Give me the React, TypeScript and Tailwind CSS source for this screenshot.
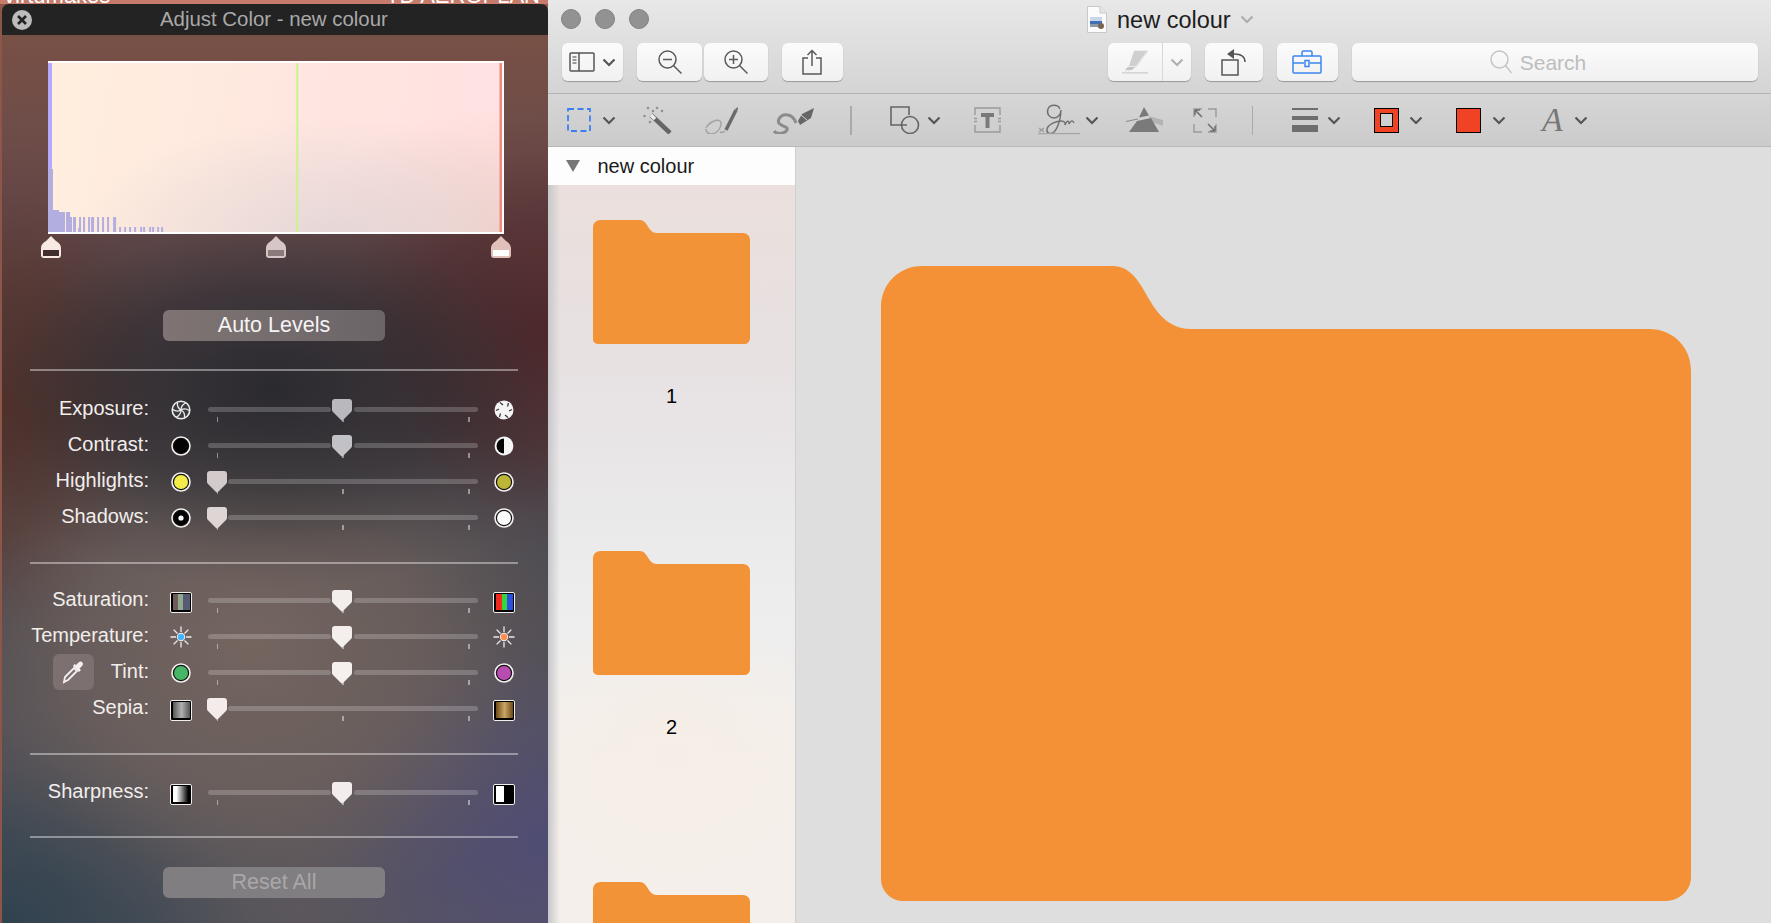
import React from 'react';

type SliderRow = {
  label: string;
  left: React.ReactNode;
  right: React.ReactNode;
  start?: boolean;
  thumb: string;
  dropper?: boolean;
};

const bars: [number, number, number][] = [
  [0, 5, 63], [5, 6, 22], [11, 4, 20], [15, 2, 20], [18, 4, 20], [22, 2, 15], [25, 3, 15],
  [30, 2, 4], [31, 2, 15], [35, 2, 15], [40, 2, 15], [43, 3, 15], [49, 2, 15], [54, 2, 15],
  [59, 2, 15], [65, 3, 15], [71, 2, 5], [76, 2, 5], [81, 2, 5], [86, 2, 5], [92, 2, 5],
  [95, 2, 5], [101, 2, 5], [104, 2, 5], [109, 2, 5], [113, 2, 5],
];

const Chevron = ({ className = '', color = '#555' }: { className?: string; color?: string }) => (
  <svg viewBox="0 0 14 9" className={`h-[9px] w-[14px] shrink-0 ${className}`}>
    <polyline points="1.5,1.5 7,7 12.5,1.5" fill="none" stroke={color} strokeWidth="2.2" />
  </svg>
);

const Ring = ({ fill, children }: { fill: string; children?: React.ReactNode }) => (
  <svg viewBox="0 0 20 20" className="h-[20px] w-[20px]">
    <circle cx="10" cy="10" r="9" fill="#111" stroke="#f4f0ee" strokeWidth="1.6" />
    <circle cx="10" cy="10" r="7" fill={fill} />
    {children}
  </svg>
);

const ApertureDark = () => (
  <svg viewBox="0 0 20 20" className="h-[20px] w-[20px]">
    <circle cx="10" cy="10" r="8.8" fill="#3a3a3c" stroke="#eee" strokeWidth="1.6" />
    <g fill="none" stroke="#eee" strokeWidth="1.3">
      <path d="M10 10C10 7 11.5 4.5 14.5 3" />
      <path d="M10 10C12.6 8.5 15.5 8.5 18 10.5" />
      <path d="M10 10C12.6 11.5 14 14 13.5 17.5" />
      <path d="M10 10C10 13 8.5 15.5 5.5 17" />
      <path d="M10 10C7.4 11.5 4.5 11.5 2 9.5" />
      <path d="M10 10C7.4 8.5 6 6 6.5 2.5" />
    </g>
  </svg>
);

const ApertureLight = () => (
  <svg viewBox="0 0 20 20" className="h-[20px] w-[20px]">
    <circle cx="10" cy="10" r="9.5" fill="#f4f4f4" />
    <g fill="none" stroke="#3a3a3c" strokeWidth="1.3">
      <path d="M6 2.5L9 5" />
      <path d="M14.5 3L13.5 6.5" />
      <path d="M18 9.5L15 11" />
      <path d="M14 17.5L11 15" />
      <path d="M5.5 17L6.5 13.5" />
      <path d="M2 10.5L5 9" />
    </g>
  </svg>
);

const Half = () => (
  <svg viewBox="0 0 20 20" className="h-[20px] w-[20px]">
    <circle cx="10" cy="10" r="9.4" fill="#f6f6f6" />
    <path d="M10 2.5A7.5 7.5 0 0 0 10 17.500Z" fill="#050505" />
  </svg>
);

const Sun = ({ dot }: { dot: string }) => (
  <svg viewBox="0 0 22 22" className="h-[22px] w-[22px]">
    <g stroke="#f0ecec" strokeWidth="1.3">
      <path d="M11 0.500V6M11 16V21.500M0.500 11H6M16 11H21.500M3.600 3.600L7.500 7.500M14.500 14.500L18.400 18.400M18.400 3.600L14.500 7.500M7.500 14.500L3.600 18.400" />
    </g>
    <circle cx="11" cy="11" r="4.200" fill="#f4f0f0" />
    <circle cx="11" cy="11" r="3.200" fill={dot} />
  </svg>
);

const Swatch = ({ inner }: { inner: string }) => (
  <div className="h-[21px] w-[22px] translate-y-[1px] rounded-[2px] border-[1.5px] border-[#f2eeec] bg-black p-[1.5px]">
    <div className={`h-full w-full ${inner}`} />
  </div>
);

const sliders: SliderRow[][] = [
  [
    { label: 'Exposure:', left: <ApertureDark />, right: <ApertureLight />, thumb: '#b9b9bd' },
    { label: 'Contrast:', left: <Ring fill="#030303" />, right: <Half />, thumb: '#c2c2c6' },
    { label: 'Highlights:', left: <Ring fill="#f5ec4a" />, right: <Ring fill="#bdb535" />, start: true, thumb: '#d3cbcb' },
    {
      label: 'Shadows:',
      left: (
        <Ring fill="#030303">
          <circle cx="10" cy="10" r="2.600" fill="#fff" />
        </Ring>
      ),
      right: <Ring fill="#fbfbfb" />,
      start: true,
      thumb: '#ded6d4',
    },
  ],
  [
    {
      label: 'Saturation:',
      left: <Swatch inner="bg-[linear-gradient(90deg,#6e5a5a_0_30%,#8fa98d_30%_60%,#565a72_60%)]" />,
      right: <Swatch inner="bg-[linear-gradient(90deg,#ef2b1f_0_33%,#35d63a_33%_66%,#2c4fe0_66%)]" />,
      thumb: '#f3eeec',
    },
    { label: 'Temperature:', left: <Sun dot="#45b5ff" />, right: <Sun dot="#ff8a50" />, thumb: '#f4eeec' },
    { label: 'Tint:', left: <Ring fill="#46b566" />, right: <Ring fill="#b84cb0" />, thumb: '#f5efed', dropper: true },
    {
      label: 'Sepia:',
      left: <Swatch inner="bg-[linear-gradient(90deg,#555_0,#b0b0b0_50%,#555)]" />,
      right: <Swatch inner="bg-[linear-gradient(90deg,#6e4a18_0,#c9a566_50%,#6e4a18)]" />,
      start: true,
      thumb: '#f3ecea',
    },
  ],
  [
    {
      label: 'Sharpness:',
      left: <Swatch inner="bg-[linear-gradient(90deg,#fff_0,#fff_20%,#000_90%)]" />,
      right: <Swatch inner="bg-[linear-gradient(90deg,#fff_0_45%,#000_45%)]" />,
      thumb: '#f2edec',
    },
  ],
];

const Thumb = ({ color, className }: { color: string; className: string }) => (
  <svg viewBox="0 0 20 22" className={`absolute top-[-8px] h-[22px] w-[20px] ${className}`}>
    <path d="M3 0H17Q20 0 20 3V11Q20 12 19 13L11 21Q10 22 9 21L1 13Q0 12 0 11V3Q0 0 3 0Z" fill={color} />
  </svg>
);

const Slider = ({ row }: { row: SliderRow }) => (
  <div className="relative ml-[15.500px] h-[5px] w-[270px]">
    {row.start ? (
      <div className="absolute left-[20px] right-0 top-0 h-[5px] rounded-full bg-white/20" />
    ) : (
      <>
        <div className="absolute left-0 top-0 h-[5px] w-[123.500px] rounded-full bg-white/20" />
        <div className="absolute left-[146px] right-0 top-0 h-[5px] rounded-full bg-white/20" />
      </>
    )}
    <div className="absolute left-[9px] top-[10px] h-[5px] w-[1.500px] bg-white/45" />
    <div className="absolute left-[134.500px] top-[10px] h-[5px] w-[1.500px] bg-white/45" />
    <div className="absolute left-[260.500px] top-[10px] h-[5px] w-[1.500px] bg-white/45" />
    <Thumb color={row.thumb} className={row.start ? '-left-[0.500px]' : 'left-[124.500px]'} />
  </div>
);

const Row = ({ row }: { row: SliderRow }) => (
  <div className="flex h-[36px] items-center">
    <div className="flex w-[149px] items-center justify-end text-[20px] leading-none text-[#f2eeec]">
      {row.dropper && (
        <div className="mr-[17px] flex h-[36px] w-[41px] items-center justify-center rounded-[6px] bg-[#7c7170]">
          <svg viewBox="0 0 24 24" className="h-[24px] w-[24px]">
            <path d="M3 22L4 17L13 8L16 11L7 20Z" fill="none" stroke="#f4f0f0" strokeWidth="1.800" />
            <path d="M12 6L18 12L20 10L18.500 8.500L21.500 5.500A2.500 2.500 0 0 0 18 2L15 5L13.500 4Z" fill="#f4f0f0" />
          </svg>
        </div>
      )}
      <span className="-translate-y-[1px]">{row.label}</span>
    </div>
    <div className="ml-[21px] flex h-[22px] w-[22px] translate-y-[1px] items-center justify-center">{row.left}</div>
    <Slider row={row} />
    <div className="ml-[15.500px] flex h-[22px] w-[22px] translate-y-[1px] items-center justify-center">{row.right}</div>
  </div>
);

const Handle = ({ body, inner, className }: { body: string; inner: string; className: string }) => (
  <svg viewBox="0 0 20 22" className={`absolute top-0 h-[22px] w-[20px] ${className}`}>
    <path d="M10 0L15 5Q20 8 20 12V19Q20 22 17 22H3Q0 22 0 19V12Q0 8 5 5Z" fill={body} />
    <rect x="1.500" y="13.500" width="17" height="7" rx="0.500" fill={inner} stroke={body} />
  </svg>
);

const Divider = ({ className }: { className: string }) => (
  <div className={`ml-[28px] h-[2px] w-[488px] shrink-0 bg-white/40 ${className}`} />
);

const Histogram = () => (
  <div className="relative ml-[46px] mt-[26px] h-[173px] w-[456px] shrink-0 border-y-2 border-r-[2.500px] border-white bg-[radial-gradient(ellipse_260px_120px_at_290px_175px,rgba(226,214,214,0.9),rgba(226,214,214,0.45)_55%,transparent),radial-gradient(ellipse_200px_130px_at_460px_175px,rgba(242,205,196,0.9),rgba(242,205,196,0.4)_55%,transparent),linear-gradient(100deg,#ffeede_0,#ffeadf_35%,#ffe5e0_60%,#ffe1e2_100%)]">
    <svg viewBox="0 0 453.5 169" className="absolute inset-0 h-full w-full" preserveAspectRatio="none">
      <rect x="0" y="0" width="4" height="108" fill="#b5a8ff" />
      {bars.map(([x, w, h], i) => (
        <rect key={i} x={x} y={169 - h} width={w} height={h} fill="#b3aee0" />
      ))}
      <rect x="248" y="0" width="2" height="169" fill="#c9f58c" />
      <rect x="451" y="0" width="2.500" height="169" fill="#f0897e" />
    </svg>
  </div>
);

const AdjustPanel = () => (
  <div className="flex h-[923px] w-[548px] shrink-0 flex-col overflow-hidden bg-[#8c5648]">
    <div className="flex h-[4px] shrink-0 items-end justify-between overflow-hidden bg-[#c67b6b] pl-[4px] pr-[8px] text-[22px] leading-none text-white">
      <span className="-mb-[3px]">virtumakes</span>
      <span className="-mb-[3px]">TD AEROPLAN</span>
    </div>
    <div className="ml-[2px] flex min-h-0 grow flex-col rounded-t-[7px] bg-[radial-gradient(ellipse_340px_200px_at_270px_385px,#2b2a2f_0,rgba(43,42,47,0.6)_50%,rgba(43,42,47,0.15)_80%,transparent_100%),radial-gradient(ellipse_330px_290px_at_250px_640px,#74655f_0,rgba(116,101,95,0.65)_50%,rgba(116,101,95,0.15)_82%,transparent_100%),radial-gradient(ellipse_260px_230px_at_545px_840px,#504d74_0,rgba(80,77,116,0.55)_50%,rgba(80,77,116,0.1)_82%,transparent_100%),radial-gradient(ellipse_300px_220px_at_0_923px,#30424f_0,rgba(48,66,79,0.55)_50%,rgba(48,66,79,0.1)_82%,transparent_100%),radial-gradient(ellipse_250px_220px_at_540px_330px,#51282a_0,rgba(81,40,42,0.6)_50%,rgba(81,40,42,0.12)_82%,transparent_100%),radial-gradient(ellipse_200px_260px_at_0_400px,#56322a_0,rgba(86,50,42,0.6)_50%,rgba(86,50,42,0.12)_82%,transparent_100%),linear-gradient(180deg,#7b5245_0,#66494a_22%,#4c4a50_52%,#5a565c_100%)]">
      <div className="flex h-[31px] shrink-0 items-center rounded-t-[7px] bg-[#232323] pl-[10px]">
        <svg viewBox="0 0 20 20" className="h-[20px] w-[20px] shrink-0">
          <circle cx="10" cy="10" r="10" fill="#bcbcbc" />
          <path d="M6 6L14 14M14 6L6 14" stroke="#232323" strokeWidth="2.600" />
        </svg>
        <span className="ml-[128px] text-[20.400px] leading-none text-[#a9a9a9]">Adjust Color - new colour</span>
      </div>
      <Histogram />
      <div className="relative mt-[2px] h-[22px] shrink-0">
        <Handle body="#f9e9e3" inner="#3f2e2c" className="left-[39px]" />
        <Handle body="#d6c6c6" inner="#8a7b7b" className="left-[264px]" />
        <Handle body="#e0c1ba" inner="#ffffff" className="left-[489px]" />
      </div>
      <div className="ml-[161px] mt-[52px] flex h-[31px] w-[222px] shrink-0 items-center justify-center rounded-[6px] bg-[linear-gradient(90deg,#7f7473,#6b6568)] text-[21.500px] leading-none text-[#f6f4f4]">
        Auto Levels
      </div>
      <Divider className="mt-[28px]" />
      <div className="-ml-[2px] mt-[20px]">
        {sliders[0].map((row) => (
          <Row key={row.label} row={row} />
        ))}
      </div>
      <Divider className="mt-[27px]" />
      <div className="-ml-[2px] mt-[18px]">
        {sliders[1].map((row) => (
          <Row key={row.label} row={row} />
        ))}
      </div>
      <Divider className="mt-[27px]" />
      <div className="-ml-[2px] mt-[19px]">
        {sliders[2].map((row) => (
          <Row key={row.label} row={row} />
        ))}
      </div>
      <Divider className="mt-[26px]" />
      <div className="ml-[161px] mt-[29px] flex h-[31px] w-[222px] shrink-0 items-center justify-center rounded-[6px] bg-[#807e80] text-[21.500px] leading-none text-[#a9a7a9]">
        Reset All
      </div>
    </div>
  </div>
);

const ToolButton = ({ className, children }: { className: string; children: React.ReactNode }) => (
  <div className={`flex h-[38px] shrink-0 items-center justify-center rounded-[6px] bg-linear-to-b from-[#fbfbfb] to-[#f1f1f1] shadow-[0_1px_1px_rgba(0,0,0,0.3)] ${className}`}>
    {children}
  </div>
);

const Magnifier = ({ plus }: { plus?: boolean }) => (
  <svg viewBox="0 0 24 24" className="h-[24px] w-[24px]">
    <g fill="none" stroke="#5a5a5a" strokeWidth="1.500">
      <circle cx="9.500" cy="9.500" r="8.500" />
      <path d="M15.500 15.500L23.500 23.500" />
      <path d={plus ? 'M5 9.500H14M9.500 5V14' : 'M5 9.500H14'} />
    </g>
  </svg>
);

const MarkupPen = () => (
  <svg viewBox="0 0 26 24" className="h-[24px] w-[26px]">
    <path d="M12 1H26L14 17H6L4 21L1 24H26V22.500H6L8 18" fill="none" stroke="#c9c9c9" strokeWidth="0.500" />
    <path d="M12 1H25L14 16H7Z" fill="#cfcfcf" />
    <path d="M6 17H13L10 20H3Z" fill="#c4c4c4" />
    <rect x="0" y="22" width="26" height="1.500" fill="#d6d6d6" />
  </svg>
);

const DocIcon = () => (
  <svg viewBox="0 0 20 27" className="h-[27px] w-[20px] shrink-0">
    <path d="M0.500 0.500H13L19.500 7V26.500H0.500Z" fill="#fbfbfb" stroke="#c8c8c8" />
    <path d="M13 0.500V7H19.500" fill="#e6e6e6" stroke="#c8c8c8" />
    <rect x="3" y="11" width="12" height="4" fill="#c9d6ea" />
    <rect x="3" y="15" width="12" height="3" fill="#3f6fb5" />
    <rect x="3" y="18" width="9" height="3" fill="#8b98a8" />
    <circle cx="14" cy="20" r="3" fill="#7a6650" />
  </svg>
);

const TopToolbar = () => (
  <div className="flex h-[94px] shrink-0 flex-col border-b border-[#b4b4b4] bg-linear-to-b from-[#e8e8e8] to-[#d4d4d4]">
    <div className="flex h-[43px] shrink-0 items-center pl-[13px]">
      <div className="-mt-[5px] h-[20px] w-[20px] rounded-full border border-[#828282] bg-[#929292]" />
      <div className="-mt-[5px] ml-[14px] h-[20px] w-[20px] rounded-full border border-[#828282] bg-[#929292]" />
      <div className="-mt-[5px] ml-[14px] h-[20px] w-[20px] rounded-full border border-[#828282] bg-[#929292]" />
      <div className="-mt-[4px] ml-[438px]">
        <DocIcon />
      </div>
      <span className="-mt-[1px] ml-[10px] text-[23.500px] leading-none text-[#1d1d1d]">new colour</span>
      <Chevron color="#adadad" className="-mt-[4px] ml-[9px]" />
    </div>
    <div className="flex items-start pl-[13.500px]">
      <ToolButton className="w-[61px] gap-[7px]">
        <svg viewBox="0 0 26 20" className="h-[20px] w-[26px]">
          <rect x="1" y="1" width="24" height="18" rx="1" fill="none" stroke="#555" strokeWidth="1.500" />
          <path d="M10 1V19" stroke="#555" strokeWidth="1.500" />
          <path d="M3.500 5H7.500M3.500 8H7.500M3.500 11H7.500" stroke="#777" strokeWidth="1.300" />
        </svg>
        <Chevron />
      </ToolButton>
      <ToolButton className="ml-[14.500px] w-[65px]">
        <Magnifier />
      </ToolButton>
      <ToolButton className="ml-[2px] w-[64px]">
        <Magnifier plus />
      </ToolButton>
      <ToolButton className="ml-[13.500px] w-[61.500px]">
        <svg viewBox="0 0 20 26" className="h-[26px] w-[20px]">
          <path d="M6 9H1V25H19V9H14M10 17V1.500M5.500 6L10 1.500L14.500 6" fill="none" stroke="#5a5a5a" strokeWidth="1.500" />
        </svg>
      </ToolButton>
      <ToolButton className="ml-[265px] w-[83px]">
        <div className="flex w-[54px] justify-center">
          <MarkupPen />
        </div>
        <div className="h-full w-px bg-[#d8d8d8]" />
        <div className="flex w-[28px] justify-center">
          <Chevron color="#b0b0b0" />
        </div>
      </ToolButton>
      <ToolButton className="ml-[14px] w-[58px]">
        <svg viewBox="0 0 26 28" className="h-[28px] w-[26px]">
          <rect x="1" y="12" width="16" height="15" fill="none" stroke="#555" strokeWidth="1.500" />
          <path d="M24 14C24 8 19 6 13 6" fill="none" stroke="#555" strokeWidth="1.500" />
          <path d="M13 1V11L6 6Z" fill="#555" />
        </svg>
      </ToolButton>
      <ToolButton className="ml-[14px] w-[60.500px]">
        <svg viewBox="0 0 30 24" className="h-[24px] w-[30px]">
          <g fill="none" stroke="#3d85f0" strokeWidth="1.500">
            <rect x="1" y="6" width="28" height="17" rx="1" />
            <path d="M10 6V2.500Q10 1 11.500 1H18.500Q20 1 20 2.500V6M1 13H12M18 13H29" />
            <rect x="13" y="10.500" width="4" height="6" />
          </g>
        </svg>
      </ToolButton>
      <ToolButton className="ml-[14.500px] w-[406px] gap-[8px] pr-[34px]">
        <svg viewBox="0 0 22 24" className="h-[24px] w-[22px]">
          <g fill="none" stroke="#c4c4c4" strokeWidth="1.500">
            <circle cx="9.500" cy="9.500" r="8.500" />
            <path d="M15.500 15.500L21.500 23" />
          </g>
        </svg>
        <span className="text-[21px] leading-none text-[#bdbdbd]">Search</span>
      </ToolButton>
    </div>
  </div>
);

const MarkupBar = () => (
  <div className="flex h-[53px] shrink-0 items-center border-b border-[#b8b8b8] bg-linear-to-b from-[#d6d6d6] to-[#cbcbcb] pl-[19px]">
    <svg viewBox="0 0 24 24" className="h-[24px] w-[24px] shrink-0">
      <rect x="1" y="1" width="22" height="22" fill="none" stroke="#3b80f0" strokeWidth="1.800" strokeDasharray="6 3.500" />
    </svg>
    <Chevron className="ml-[11px]" />
    <svg viewBox="0 0 29 28" className="ml-[27px] h-[28px] w-[29px] shrink-0">
      <path d="M8 9L27 27" stroke="#666" strokeWidth="4.500" />
      <path d="M8 9L12 13" stroke="#ededed" strokeWidth="3.500" />
      <g fill="#909090">
        <circle cx="5" cy="2" r="1.300" /><circle cx="14" cy="2" r="1.300" /><circle cx="1.500" cy="10" r="1.300" />
        <circle cx="19" cy="5" r="1.300" /><circle cx="7" cy="16" r="1.300" /><circle cx="10" cy="5" r="1.300" />
      </g>
    </svg>
    <svg viewBox="0 0 34 28" className="ml-[33px] h-[28px] w-[34px] shrink-0">
      <path d="M1 22C4 16 12 13 15 15C18 18 14 27 7 28C3 28 1 26 1 23M15 26C17 27 19 26 20 25" fill="none" stroke="#a2a2a2" strokeWidth="1.400" />
      <path d="M21 24L31 4" stroke="#6a6a6a" strokeWidth="3.500" />
      <path d="M30 3L33 1L32.500 5Z" fill="#6a6a6a" />
    </svg>
    <svg viewBox="0 0 41 28" className="ml-[34px] h-[28px] w-[41px] shrink-0">
      <path d="M23 17C20 8 10 6 6 13C3 19 12 20 14 22C16 26 5 30 1 25" fill="none" stroke="#8c8c8c" strokeWidth="3" />
      <path d="M25 15L29 8L41 2L38 12L27 19Z" fill="#666" />
      <path d="M28 9L34 14" stroke="#d4d4d4" strokeWidth="1" />
    </svg>
    <div className="ml-[36px] h-[29px] w-[1.500px] shrink-0 bg-[#aaaaaa]" />
    <svg viewBox="0 0 30 28" className="ml-[38.500px] h-[28px] w-[30px] shrink-0">
      <path d="M17 19H1V1H19V9" fill="none" stroke="#666" strokeWidth="1.600" />
      <circle cx="20" cy="19" r="8.500" fill="none" stroke="#666" strokeWidth="1.600" />
    </svg>
    <Chevron className="ml-[7px]" />
    <svg viewBox="0 0 27 26" className="ml-[33px] h-[26px] w-[27px] shrink-0">
      <path d="M1 8V1H26V8M1 18V25H26V18" fill="none" stroke="#9a9a9a" strokeWidth="1.400" />
      <path d="M0 11.500H3M24 11.500H27M0 14.500H3M24 14.500H27" stroke="#9a9a9a" strokeWidth="1.400" />
      <path d="M7 6H20V10H15.500V21H11.500V10H7Z" fill="#7a7a7a" />
    </svg>
    <svg viewBox="0 0 42 32" className="ml-[37px] h-[32px] w-[42px] shrink-0">
      <path d="M22 5C20 0 12 0 10 5C8 10 12 14 16 14C20 14 23 10 23 6C23 14 20 24 16 28C12 31 8 29 9 25C10 20 19 17 23 17C28 17 27 20 27 21C29 16 31 16 31 20C33 16 35 16 36 19" fill="none" stroke="#6f6f6f" strokeWidth="1.400" />
      <path d="M1 24L6 28M6 24L1 28" stroke="#999" strokeWidth="1.200" />
      <rect x="0" y="29" width="42" height="1.200" fill="#a4a4a4" />
    </svg>
    <Chevron className="ml-[5px]" />
    <svg viewBox="0 0 37 26" className="ml-[27px] h-[26px] w-[37px] shrink-0">
      <path d="M23 9L37 13V19L26 15Z" fill="#b4b4b4" />
      <path d="M18 0L23 8.500L13 10.500Z" fill="#7a7a7a" />
      <path d="M11 14L25 11L33 25H3Z" fill="#7a7a7a" />
      <path d="M0 14.500L12 12" stroke="#8a8a8a" strokeWidth="1" />
    </svg>
    <svg viewBox="0 0 24 25" className="ml-[29.500px] h-[25px] w-[24px] shrink-0">
      <path d="M9 1H1V9M15 24H23V16M1 16V24H9M23 9V1H15" fill="none" stroke="#9a9a9a" strokeWidth="1.400" />
      <path d="M2 2L9 9M2 2V7M2 2H7M22 23L15 16M22 23V18M22 23H17" fill="none" stroke="#6e6e6e" strokeWidth="1.500" />
    </svg>
    <div className="ml-[35px] h-[29px] w-[1.500px] shrink-0 bg-[#aaaaaa]" />
    <div className="ml-[39px] flex h-[24px] w-[26px] shrink-0 flex-col justify-between">
      <div className="h-[2px] bg-[#6e6e6e]" />
      <div className="h-[4px] bg-[#6e6e6e]" />
      <div className="h-[7px] bg-[#6e6e6e]" />
    </div>
    <Chevron className="ml-[9px]" />
    <div className="ml-[33px] flex h-[25px] w-[25px] shrink-0 items-center justify-center border border-black bg-[#f04325]">
      <div className="h-[14px] w-[13px] border border-black bg-[#cfcfcf]" />
    </div>
    <Chevron className="ml-[10px]" />
    <div className="ml-[32.500px] h-[25px] w-[25.500px] shrink-0 border border-black bg-[#f04325]" />
    <Chevron className="ml-[11px]" />
    <span className="ml-[36px] w-[20px] shrink-0 text-center [font-family:'Liberation_Serif',serif] text-[34px] italic leading-none text-[#777777]">
      A
    </span>
    <Chevron className="ml-[11.500px]" />
  </div>
);

const ThumbFolder = () => (
  <svg viewBox="0 0 157 125" className="ml-[45px] block h-[124px] w-[157px]" preserveAspectRatio="none">
    <path
      d="M8 0H46C50 0 52 2 54 5C57 10 59 13 64 13H150C154 13 157 16 157 20V119C157 122 155 125 152 125H5C2 125 0 123 0 120V8C0 3 3 0 8 0Z"
      fill="#f39337"
    />
  </svg>
);

const Sidebar = () => (
  <div className="h-full w-[248px] shrink-0 overflow-hidden border-r border-[#cfcfcf] bg-[linear-gradient(90deg,#c7c7ca_0,transparent_12px),radial-gradient(ellipse_170px_150px_at_125px_610px,#f6eee6,transparent),linear-gradient(180deg,#ebdfdb_0,#e7e1e2_220px,#ebebec_400px,#eeeeee_480px,#f5efeb_620px)]">
    <div className="flex h-[38px] items-center bg-[#fdfdfd] pl-[17.500px]">
      <svg viewBox="0 0 14 12" className="h-[12px] w-[14px]">
        <path d="M0 0H14L7 12Z" fill="#777777" />
      </svg>
      <span className="ml-[18px] text-[20px] leading-none text-[#1a1a1a]">new colour</span>
    </div>
    <div className="pt-[35px]">
      {['1', '2', ''].map((n) => (
        <div key={n} className="h-[331px]">
          <ThumbFolder />
          {n && <div className="mt-[40px] h-[24px] text-center text-[20px] leading-[24px] text-black">{n}</div>}
        </div>
      ))}
    </div>
  </div>
);

export default function App() {
  return (
    <div className="flex h-[923px] w-[1771px] overflow-hidden bg-[#2e2028] [font-family:'Liberation_Sans',Arial,sans-serif]">
      <AdjustPanel />
      <div className="flex h-full min-w-0 grow flex-col">
        <TopToolbar />
        <MarkupBar />
        <div className="flex min-h-0 grow">
          <Sidebar />
          <div className="h-full grow bg-[#dedede] pl-[85px] pt-[119px]">
            <svg viewBox="0 0 810 635" className="block h-[635px] w-[810px]">
              <path
                d="M41 0H232C246 0 254 10 261 21C272 40 283 63 310 63H768C792 63 810 81 810 105V611C810 625 798 635 784 635H22C10 635 0 625 0 613V41C0 18 18 0 41 0Z"
                fill="#f49136"
              />
            </svg>
          </div>
        </div>
      </div>
    </div>
  );
}
